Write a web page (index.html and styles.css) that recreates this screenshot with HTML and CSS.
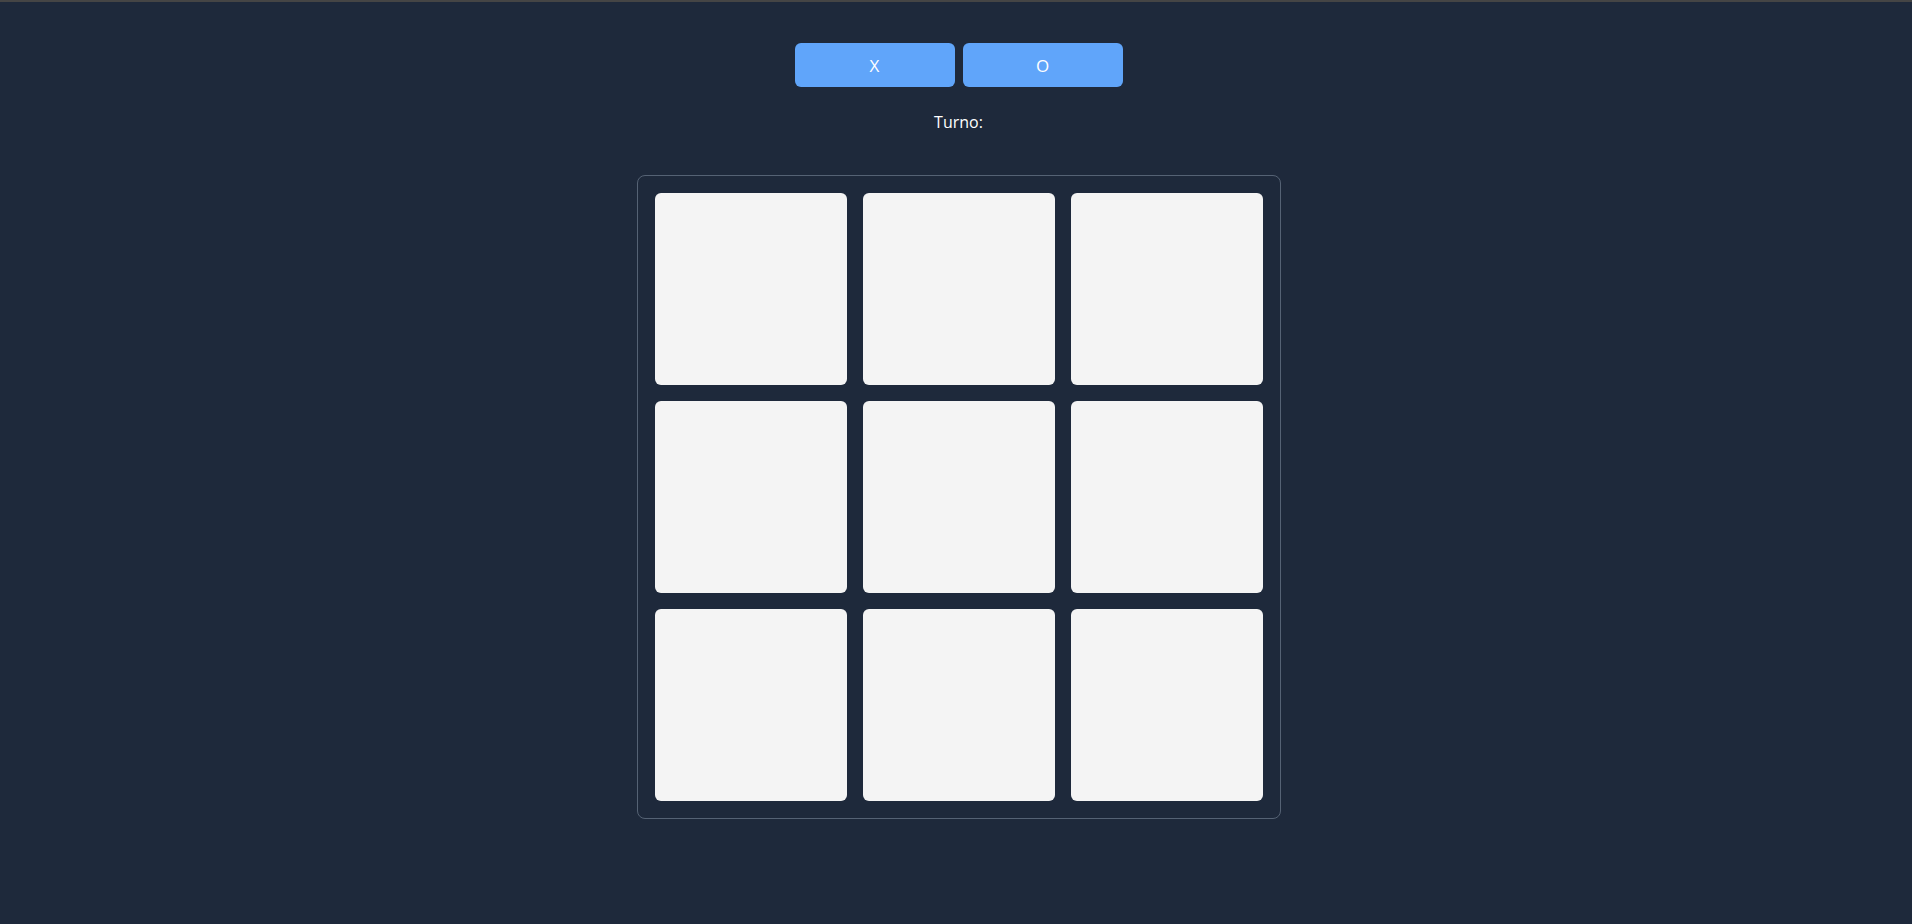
FILE: index.html
```html
<!DOCTYPE html>
<html lang="es">
<head>
<meta charset="utf-8">
<title>Tres en raya</title>
<link rel="stylesheet" href="styles.css">
</head>
<body>
<div class="topline"></div>
<main class="game">
  <div class="choices">
    <button class="choice">X</button>
    <button class="choice">O</button>
  </div>
  <p class="turn">Turno:</p>
  <div class="board">
    <div class="cell"></div>
    <div class="cell"></div>
    <div class="cell"></div>
    <div class="cell"></div>
    <div class="cell"></div>
    <div class="cell"></div>
    <div class="cell"></div>
    <div class="cell"></div>
    <div class="cell"></div>
  </div>
</main>
</body>
</html>
```

FILE: styles.css
```css
html, body {
  margin: 0;
  padding: 0;
  background: #1e293b;
  height: 100%;
  overflow: hidden;
}

body {
  font-family: "Open Sans", "Liberation Sans", sans-serif;
  color: #ffffff;
}

.topline {
  height: 2px;
  background: #454545;
}

.game {
  display: flex;
  flex-direction: column;
  align-items: center;
  padding-top: 41px;
  padding-left: 5px;
}

.choices {
  display: flex;
  gap: 8px;
}

.choice {
  width: 160px;
  height: 44px;
  border: none;
  border-radius: 6px;
  background: #60a5fa;
  color: #ffffff;
  font-family: "Open Sans", "Liberation Sans", sans-serif;
  font-size: 17px;
  padding: 0;
}

.turn {
  margin: 23px 0 0;
  font-size: 16px;
  line-height: 24px;
}

.board {
  margin-top: 41px;
  display: grid;
  grid-template-columns: repeat(3, 192px);
  grid-auto-rows: 192px;
  gap: 16px;
  padding: 17px;
  border: 1px solid #556274;
  border-radius: 8px;
}

.cell {
  background: #f4f4f4;
  border-radius: 6px;
}
```
